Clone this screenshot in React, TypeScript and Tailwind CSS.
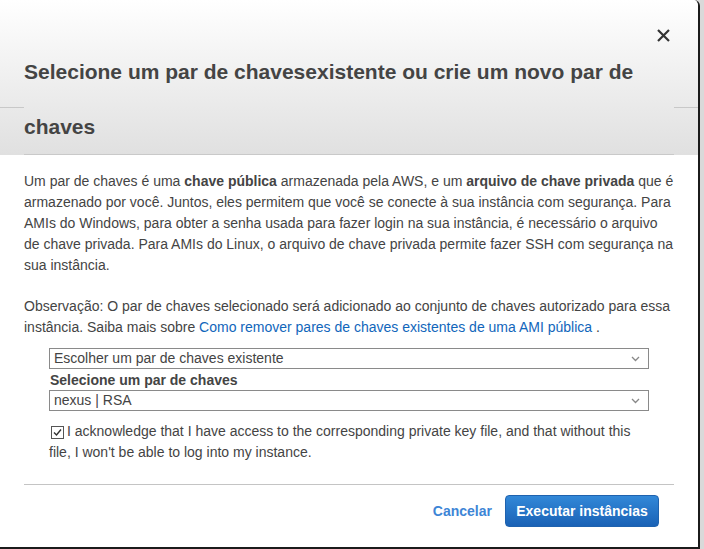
import React from "react";

export default function App() {
  return (
    <div
      className="w-[704px] h-[549px] bg-[#d9d9d9] flex overflow-hidden"
      style={{ fontFamily: '"Liberation Sans", Arial, sans-serif' }}
    >
      <div className="w-[700px] h-[549px] shrink-0 bg-white border-r-2 border-b-2 border-[#1b1b1b] rounded-tr-[6px] flex flex-col overflow-hidden">
        {/* Header */}
        <div className="relative h-[155px] shrink-0 bg-gradient-to-b from-white to-[#e0e0e0]">
          <div className="absolute left-0 top-[107px] w-[24px] h-px bg-[#c8c8c8]" />
          <div className="absolute right-0 top-[107px] w-[24px] h-px bg-[#c8c8c8]" />
          <button className="absolute left-[656px] top-[28px] w-[15px] h-[15px] flex items-center justify-center">
            <svg width="13" height="13" viewBox="0 0 13 13">
              <path d="M1 1 L12 12 M12 1 L1 12" stroke="#333" strokeWidth="2.2" strokeLinecap="butt" />
            </svg>
          </button>
          <div className="ml-[24px] mr-[24px] h-[155px] pt-[44px] border-b border-[#c9c9c9]">
            <h4 className="text-[21px] leading-[55px] font-bold text-[#444] pr-[12px]">
              Selecione um par de chavesexistente ou crie um novo par de chaves
            </h4>
          </div>
        </div>

        {/* Body */}
        <div className="px-[24px] pt-[16px] text-[14px] leading-[21px] text-[#444]">
          <p className="w-[652px]">
            Um par de chaves é uma <b>chave pública</b> armazenada pela AWS, e um{" "}
            <b>arquivo de chave privada</b> que é armazenado por você. Juntos, eles permitem que você se
            conecte à sua instância com segurança. Para AMIs do Windows, para obter a senha usada para
            fazer login na sua instância, é necessário o arquivo de chave privada. Para AMIs do Linux, o
            arquivo de chave privada permite fazer SSH com segurança na sua instância.
          </p>
          <p className="mt-[20px] w-[652px]">
            Observação: O par de chaves selecionado será adicionado ao conjunto de chaves autorizado
            para essa instância. Saiba mais sobre{" "}
            <a className="text-[#1166bb]">Como remover pares de chaves existentes de uma AMI pública</a>{" "}
            .
          </p>

          <div className="ml-[25px] w-[600px] mt-[10px]">
            <div className="h-[21px] border border-[#8a8a8a] flex items-center justify-between pl-[4px] pr-[8px] leading-[19px]">
              <span>Escolher um par de chaves existente</span>
              <svg width="9" height="6" viewBox="0 0 9 6">
                <path d="M1 1 L4.5 4.5 L8 1" stroke="#888" strokeWidth="1.3" fill="none" />
              </svg>
            </div>
            <div className="font-bold leading-[20px] pl-[1px] mt-px">Selecione um par de chaves</div>
            <div className="h-[21px] border border-[#8a8a8a] flex items-center justify-between pl-[4px] pr-[8px] leading-[19px]">
              <span>nexus | RSA</span>
              <svg width="9" height="6" viewBox="0 0 9 6">
                <path d="M1 1 L4.5 4.5 L8 1" stroke="#888" strokeWidth="1.3" fill="none" />
              </svg>
            </div>
            <p className="mt-[10px] leading-[21px]">
              <span className="inline-flex align-[-2px] w-[13px] h-[13px] border border-[#555] bg-white items-center justify-center ml-[2px] mr-[3px]">
                <svg width="11" height="11" viewBox="0 0 11 11">
                  <path d="M2 5.5 L4.5 8 L9 2.5" stroke="#333" strokeWidth="1.4" fill="none" />
                </svg>
              </span>
              I acknowledge that I have access to the corresponding private key file, and that without
              this file, I won't be able to log into my instance.
            </p>
          </div>
        </div>

        {/* Footer */}
        <div className="mt-auto ml-[24px] mr-[24px] border-t border-[#c4c4c4] pt-[10px] pb-[20px] flex justify-end items-center pr-[15px]">
          <a className="text-[14px] font-bold text-[#3d85d6] mr-[13px]">Cancelar</a>
          <button className="h-[32px] w-[154px] rounded-[4px] border border-[#1f62ae] bg-gradient-to-b from-[#3288d8] to-[#1a62b6] text-white text-[14px] font-bold">
            Executar instâncias
          </button>
        </div>
      </div>
    </div>
  );
}
